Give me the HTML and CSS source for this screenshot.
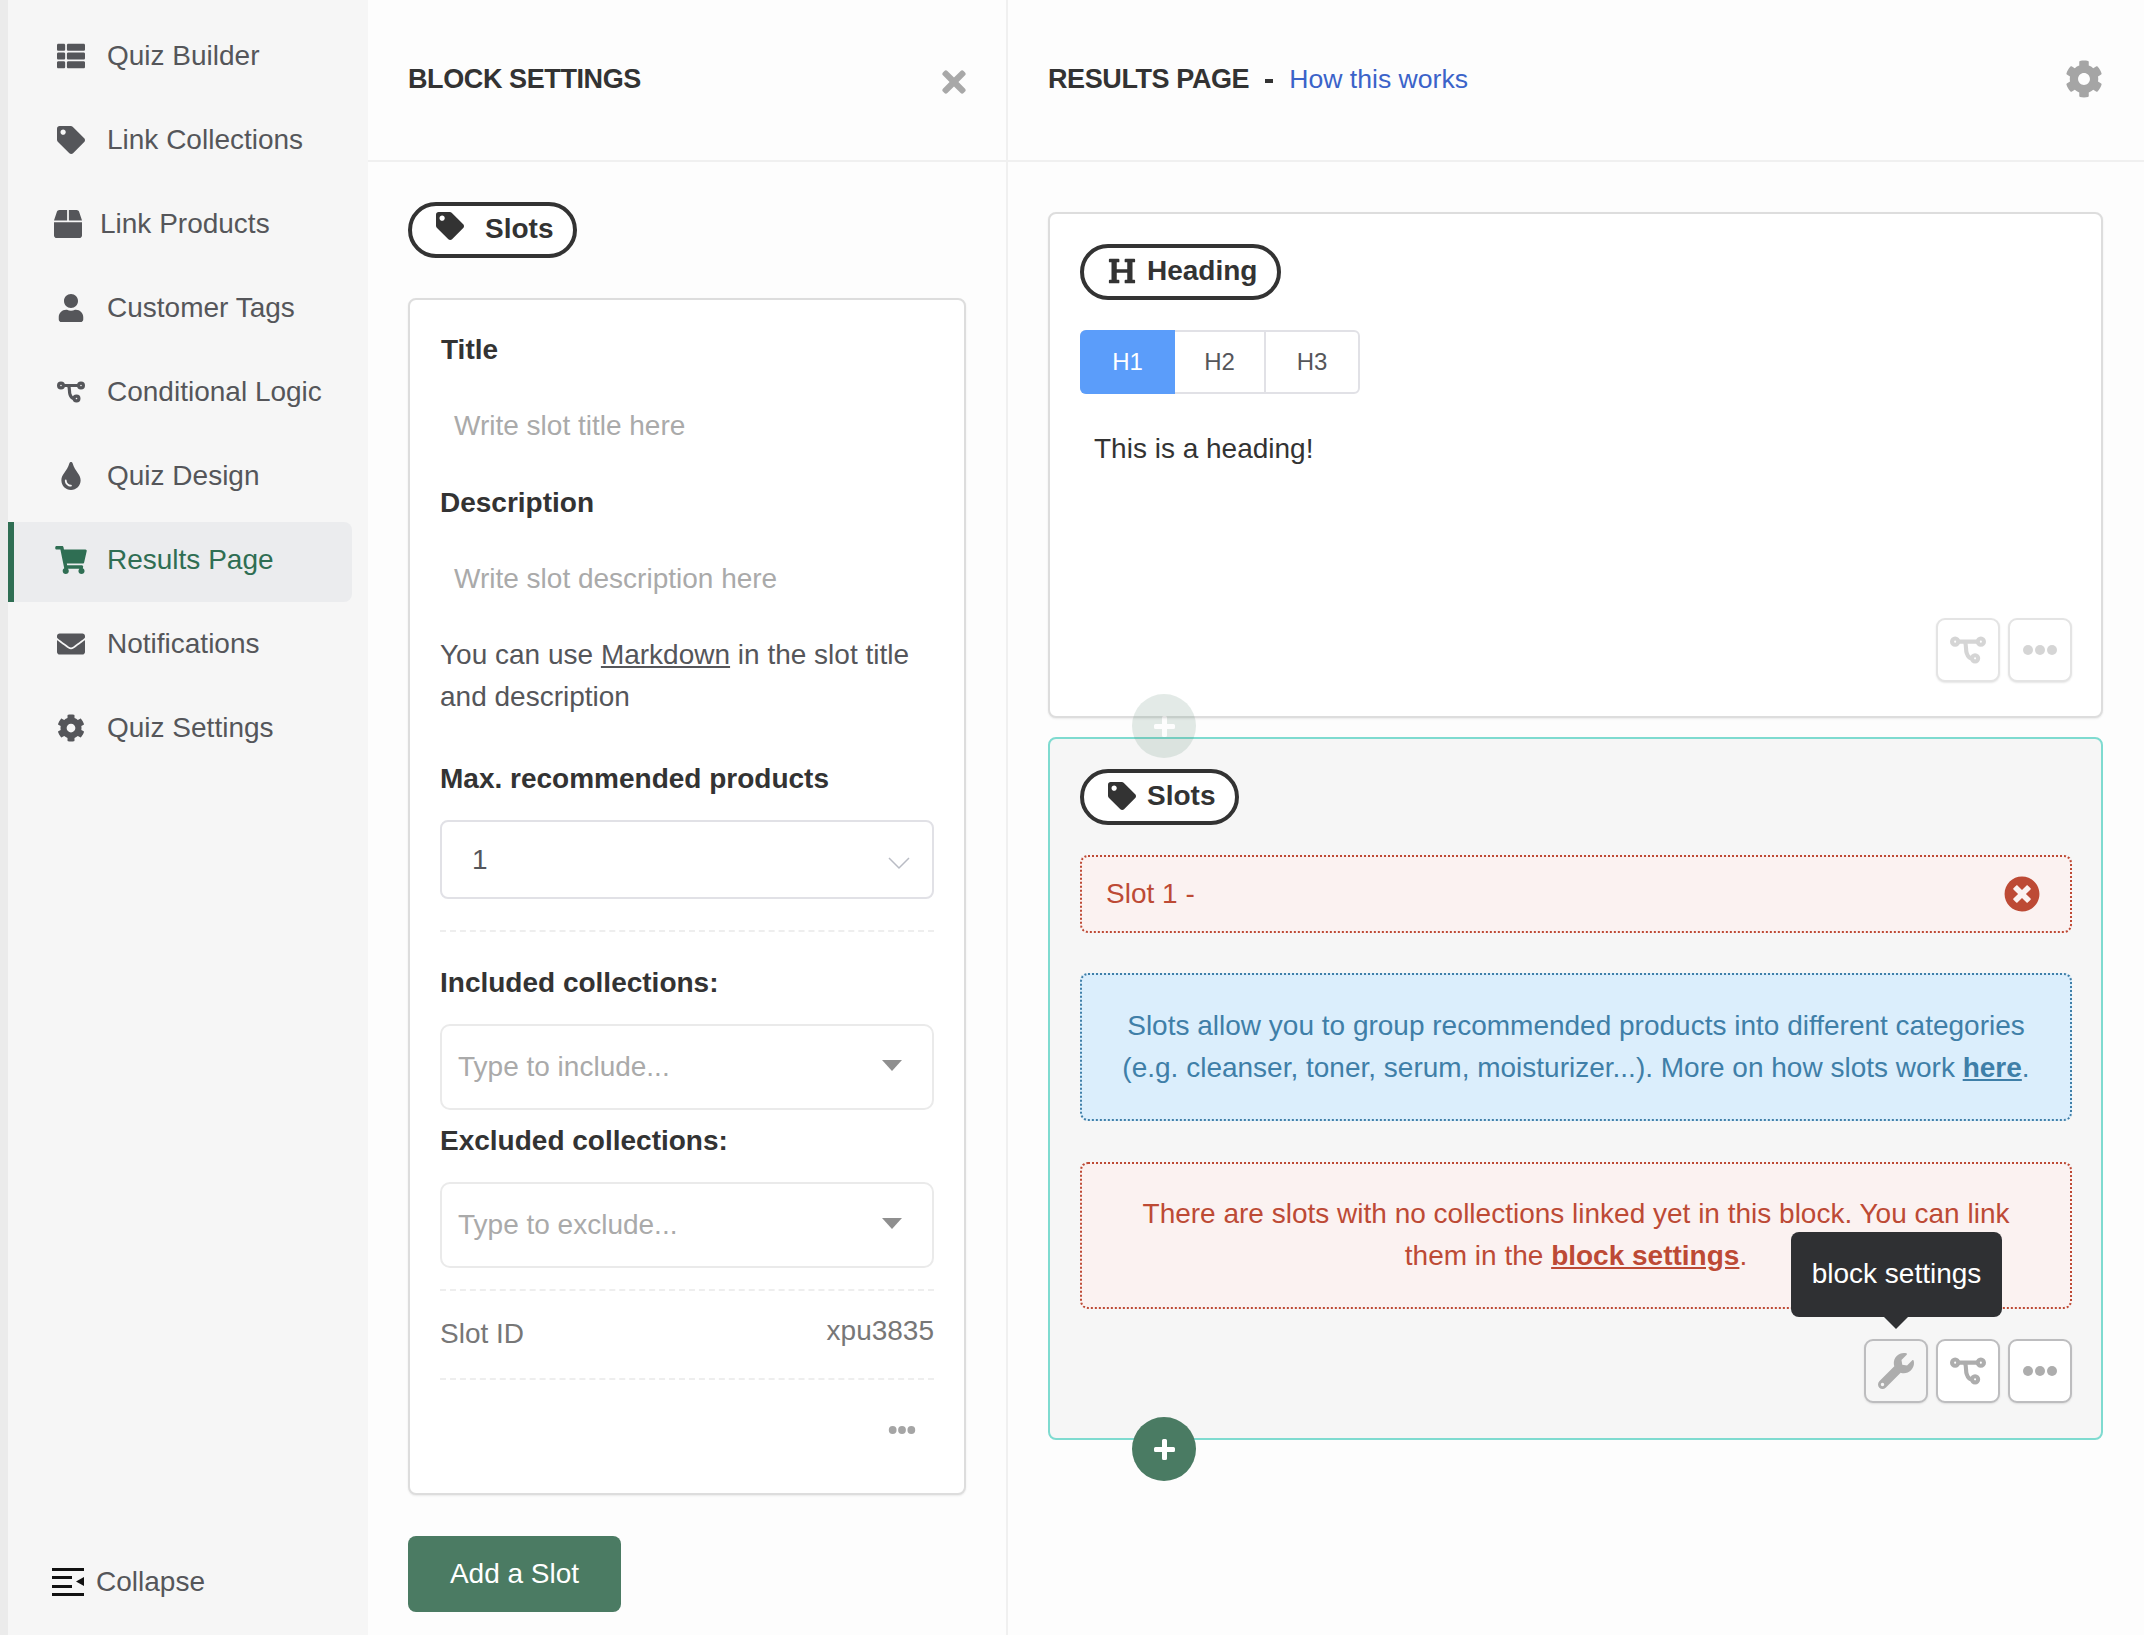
FILE: index.html
```html
<!DOCTYPE html>
<html>
  <head>
    <meta charset="utf-8">
    <title>Results Page</title>
    <link rel="stylesheet" href="styles.css">
  </head>
  <body>
    <svg class="sprites" xmlns="http://www.w3.org/2000/svg">
      <symbol id="i-list" viewBox="0 0 512 512"><path d="M149.333 216v80c0 13.255-10.745 24-24 24H24c-13.255 0-24-10.745-24-24v-80c0-13.255 10.745-24 24-24h101.333c13.255 0 24 10.745 24 24zM0 376v80c0 13.255 10.745 24 24 24h101.333c13.255 0 24-10.745 24-24v-80c0-13.255-10.745-24-24-24H24c-13.255 0-24 10.745-24 24zM125.333 32H24C10.745 32 0 42.745 0 56v80c0 13.255 10.745 24 24 24h101.333c13.255 0 24-10.745 24-24V56c0-13.255-10.745-24-24-24zm80 448H488c13.255 0 24-10.745 24-24v-80c0-13.255-10.745-24-24-24H205.333c-13.255 0-24 10.745-24 24v80c0 13.255 10.745 24 24 24zm-24-424v80c0 13.255 10.745 24 24 24H488c13.255 0 24-10.745 24-24V56c0-13.255-10.745-24-24-24H205.333c-13.255 0-24 10.745-24 24zm24 264H488c13.255 0 24-10.745 24-24v-80c0-13.255-10.745-24-24-24H205.333c-13.255 0-24 10.745-24 24v80c0 13.255 10.745 24 24 24z"/></symbol>
      <symbol id="i-tag" viewBox="0 0 512 512"><path d="M0 252.118V48C0 21.49 21.49 0 48 0h204.118a48 48 0 0 1 33.941 14.059l211.882 211.882c18.745 18.745 18.745 49.137 0 67.882L293.823 497.941c-18.745 18.745-49.137 18.745-67.882 0L14.059 286.059A48 48 0 0 1 0 252.118zM112 64c-26.51 0-48 21.49-48 48s21.49 48 48 48 48-21.49 48-48-21.49-48-48-48z"/></symbol>
      <symbol id="i-box" viewBox="0 0 512 512"><path d="M509.5 184.6L458.9 32.8C452.4 13.2 434.1 0 413.4 0H272v192h238.7c-.4-2.5-.4-5-1.2-7.4zM240 0H98.6c-20.7 0-39 13.2-45.5 32.8L2.5 184.6c-.8 2.4-.8 4.9-1.2 7.4H240V0zM0 224v240c0 26.5 21.5 48 48 48h416c26.5 0 48-21.5 48-48V224H0z"/></symbol>
      <symbol id="i-user" viewBox="0 0 448 512"><path d="M224 256c70.7 0 128-57.3 128-128S294.7 0 224 0 96 57.3 96 128s57.3 128 128 128zm89.6 32h-16.7c-22.2 10.2-46.9 16-72.9 16s-50.6-5.8-72.9-16h-16.7C60.2 288 0 348.2 0 422.4V464c0 26.5 21.5 48 48 48h352c26.5 0 48-21.5 48-48v-41.6c0-74.2-60.2-134.4-134.4-134.4z"/></symbol>
      <symbol id="i-logic" viewBox="0 0 28 21"><g fill="none" stroke="currentColor" stroke-width="3.2"><circle cx="4" cy="4" r="2.4"/><circle cx="24" cy="4" r="2.4"/><circle cx="19.5" cy="17" r="2.4"/><path d="M6.500 4h15M11.500 4c1.500 3 .5 6 1.500 9s2.500 4 4 4"/></g></symbol>
      <symbol id="i-tint" viewBox="0 0 352 512"><path d="M205.22 22.09c-7.94-28.78-49.44-30.12-58.44 0C100.01 179.85 0 222.72 0 333.91 0 432.35 78.72 512 176 512s176-79.65 176-178.09c0-111.75-99.79-153.34-146.78-311.82zM176 448c-61.75 0-112-50.25-112-112 0-8.84 7.16-16 16-16s16 7.16 16 16c0 44.11 35.89 80 80 80 8.84 0 16 7.16 16 16s-7.16 16-16 16z"/></symbol>
      <symbol id="i-cart" viewBox="0 0 576 512"><path d="M528.12 301.319l47.273-208C578.806 78.301 567.391 64 551.99 64H159.208l-9.166-44.81C147.758 8.021 137.93 0 126.529 0H24C10.745 0 0 10.745 0 24v16c0 13.255 10.745 24 24 24h69.883l70.248 343.435C147.325 417.1 136 435.222 136 456c0 30.928 25.072 56 56 56s56-25.072 56-56c0-15.674-6.447-29.835-16.824-40h209.647C430.447 426.165 424 440.326 424 456c0 30.928 25.072 56 56 56s56-25.072 56-56c0-22.172-12.888-41.332-31.579-50.405l5.517-24.276c3.413-15.018-8.002-29.319-23.403-29.319H218.117l-6.545-32h293.145c11.206 0 20.92-7.754 23.403-18.681z"/></symbol>
      <symbol id="i-mail" viewBox="0 0 512 512"><path d="M502.3 190.8c3.9-3.1 9.7-.2 9.7 4.700V400c0 26.5-21.5 48-48 48H48c-26.5 0-48-21.500-48-48V195.600c0-5 5.700-7.800 9.700-4.700 22.400 17.400 52.100 39.500 154.100 113.600 21.100 15.400 56.700 47.800 92.200 47.600 35.700.3 72-32.800 92.300-47.600 102-74.100 131.600-96.300 154-113.700zM256 320c23.200.4 56.600-29.200 73.400-41.400 132.700-96.300 142.800-104.700 173.400-128.700 5.800-4.500 9.200-11.500 9.200-18.900v-19c0-26.500-21.500-48-48-48H48C21.500 64 0 85.500 0 112v19c0 7.400 3.400 14.300 9.200 18.900 30.600 23.900 40.700 32.400 173.400 128.700 16.800 12.200 50.200 41.800 73.400 41.400z"/></symbol>
      <symbol id="i-cog" viewBox="0 0 512 512"><path d="M487.4 315.7l-42.6-24.6c4.300-23.200 4.300-47 0-70.200l42.600-24.600c4.900-2.800 7.100-8.600 5.500-14-11.100-35.600-30-67.800-54.700-94.600-3.800-4.100-10-5.100-14.800-2.300L380.800 110c-17.900-15.400-38.500-27.300-60.800-35.100V25.800c0-5.600-3.900-10.500-9.400-11.700-36.700-8.200-74.300-7.800-109.200 0-5.500 1.200-9.400 6.100-9.400 11.700V75c-22.200 7.900-42.800 19.800-60.800 35.100L88.700 85.500c-4.900-2.800-11-1.900-14.800 2.300-24.700 26.700-43.600 58.900-54.700 94.600-1.700 5.400.6 11.200 5.500 14L67.300 221c-4.300 23.200-4.300 47 0 70.200l-42.600 24.600c-4.900 2.800-7.100 8.600-5.500 14 11.100 35.600 30 67.800 54.700 94.600 3.800 4.100 10 5.100 14.800 2.300l42.600-24.600c17.900 15.400 38.500 27.300 60.800 35.100v49.200c0 5.600 3.900 10.500 9.400 11.700 36.700 8.200 74.300 7.800 109.200 0 5.500-1.200 9.400-6.100 9.400-11.700v-49.200c22.200-7.900 42.800-19.800 60.800-35.100l42.600 24.600c4.900 2.800 11 1.900 14.800-2.300 24.700-26.700 43.600-58.900 54.700-94.600 1.500-5.500-.7-11.300-5.600-14.100zM256 336c-44.100 0-80-35.900-80-80s35.900-80 80-80 80 35.900 80 80-35.900 80-80 80z"/></symbol>
      <symbol id="i-times" viewBox="0 0 352 512"><path d="M242.720 256l100.070-100.070c12.280-12.280 12.280-32.190 0-44.480l-22.240-22.240c-12.280-12.280-32.190-12.280-44.480 0L176 189.280 75.930 89.210c-12.280-12.280-32.190-12.280-44.480 0L9.210 111.450c-12.280 12.280-12.280 32.190 0 44.480L109.280 256 9.210 356.070c-12.280 12.280-12.280 32.190 0 44.480l22.240 22.240c12.280 12.280 32.200 12.280 44.480 0L176 322.720l100.070 100.070c12.280 12.280 32.200 12.280 44.480 0l22.240-22.240c12.280-12.280 12.280-32.190 0-44.480L242.720 256z"/></symbol>
      <symbol id="i-times-circle" viewBox="0 0 512 512"><path d="M256 8C119 8 8 119 8 256s111 248 248 248 248-111 248-248S393 8 256 8zm121.600 313.100c4.700 4.700 4.700 12.300 0 17L338 377.600c-4.700 4.700-12.300 4.700-17 0L256 312l-65.100 65.600c-4.700 4.700-12.300 4.700-17 0L134.400 338c-4.700-4.700-4.700-12.300 0-17l65.600-65-65.600-65.100c-4.700-4.700-4.700-12.300 0-17l39.600-39.600c4.700-4.700 12.300-4.700 17 0l65 65.700 65.100-65.600c4.700-4.700 12.300-4.700 17 0l39.600 39.600c4.700 4.700 4.700 12.300 0 17L312 256l65.600 65.100z"/></symbol>
      <symbol id="i-wrench" viewBox="0 0 512 512"><path d="M507.730 109.100c-2.240-9.030-13.540-12.090-20.120-5.510l-74.360 74.360-67.880-11.310-11.310-67.880 74.360-74.360c6.620-6.620 3.430-17.900-5.660-20.160-47.380-11.740-99.550.91-136.580 37.930-39.640 39.640-50.550 97.100-34.050 147.200L18.740 402.760c-24.990 24.990-24.990 65.510 0 90.500 24.990 24.990 65.510 24.990 90.500 0l213.210-213.210c50.120 16.710 107.470 5.680 147.370-34.220 37.070-37.070 49.700-89.320 37.910-136.730zM64 472c-13.250 0-24-10.750-24-24 0-13.260 10.750-24 24-24s24 10.740 24 24c0 13.250-10.750 24-24 24z"/></symbol>
      <symbol id="i-dots" viewBox="0 0 36 12"><circle cx="6" cy="6" r="5"/><circle cx="18" cy="6" r="5"/><circle cx="30" cy="6" r="5"/></symbol>
      <symbol id="i-heading" viewBox="0 0 512 512"><path d="M448 96v320h32a16 16 0 0 1 16 16v32a16 16 0 0 1-16 16H320a16 16 0 0 1-16-16v-32a16 16 0 0 1 16-16h32V288H160v128h32a16 16 0 0 1 16 16v32a16 16 0 0 1-16 16H32a16 16 0 0 1-16-16v-32a16 16 0 0 1 16-16h32V96H32a16 16 0 0 1-16-16V48a16 16 0 0 1 16-16h160a16 16 0 0 1 16 16v32a16 16 0 0 1-16 16h-32v128h192V96h-32a16 16 0 0 1-16-16V48a16 16 0 0 1 16-16h160a16 16 0 0 1 16 16v32a16 16 0 0 1-16 16z"/></symbol>
      <symbol id="i-plus" viewBox="0 0 21 21"><path d="M8 1.500a1.500 1.500 0 0 1 1.500-1.500h2a1.500 1.500 0 0 1 1.500 1.500V8h6.500a1.500 1.500 0 0 1 1.500 1.500v2a1.500 1.500 0 0 1-1.500 1.500H13v6.500a1.500 1.500 0 0 1-1.500 1.500h-2A1.500 1.500 0 0 1 8 19.500V13H1.500A1.500 1.500 0 0 1 0 11.500v-2A1.500 1.500 0 0 1 1.500 8H8z"/></symbol>
    </svg>

    <div class="app">
      <nav class="sidebar">
        <a class="nav-item"><svg class="nav-icon"><use href="#i-list"/></svg>Quiz Builder</a>
        <a class="nav-item"><svg class="nav-icon"><use href="#i-tag"/></svg>Link Collections</a>
        <a class="nav-item nav-item-box"><svg class="nav-icon"><use href="#i-box"/></svg>Link Products</a>
        <a class="nav-item"><svg class="nav-icon"><use href="#i-user"/></svg>Customer Tags</a>
        <a class="nav-item"><svg class="nav-icon"><use href="#i-logic"/></svg>Conditional Logic</a>
        <a class="nav-item"><svg class="nav-icon"><use href="#i-tint"/></svg>Quiz Design</a>
        <a class="nav-item active"><svg class="nav-icon"><use href="#i-cart"/></svg>Results Page</a>
        <a class="nav-item"><svg class="nav-icon"><use href="#i-mail"/></svg>Notifications</a>
        <a class="nav-item"><svg class="nav-icon"><use href="#i-cog"/></svg>Quiz Settings</a>
        <a class="collapse">
          <svg class="collapse-icon" viewBox="0 0 32 28">
            <path d="M0 0h32v3H0zM0 8h20v3H0zM0 17h20v3H0zM0 25h32v3H0zM32 9v9l-8-4.500z"/>
          </svg>
          Collapse
        </a>
      </nav>

      <section class="settings">
        <header class="panel-header">
          <h2 class="panel-title">BLOCK SETTINGS</h2>
          <svg class="close-icon"><use href="#i-times"/></svg>
        </header>
        <div class="settings-body">
          <div class="pill pill-wide"><svg class="pill-icon"><use href="#i-tag"/></svg>Slots</div>

          <div class="slot-card">
            <label class="label label-first">Title</label>
            <div class="text-input">Write slot title here</div>
            <label class="label">Description</label>
            <div class="text-input">Write slot description here</div>
            <p class="help">You can use <u>Markdown</u> in the slot title and description</p>

            <label class="label label-max">Max. recommended products</label>
            <div class="select">
              <span>1</span>
              <svg class="select-chevron" viewBox="0 0 22 14"><path d="M1 2l10 10L21 2" fill="none" stroke="#b9bcc4" stroke-width="1.500"/></svg>
            </div>
            <hr class="dashed dashed-max">

            <label class="label">Included collections:</label>
            <div class="combo">Type to include...<i class="caret"></i></div>
            <label class="label label-excluded">Excluded collections:</label>
            <div class="combo">Type to exclude...<i class="caret"></i></div>
            <hr class="dashed dashed-id">

            <div class="slot-id"><span>Slot ID</span><span class="slot-id-value">xpu3835</span></div>
            <hr class="dashed dashed-end">
            <div class="slot-more"><svg class="slot-dots"><use href="#i-dots"/></svg></div>
          </div>

          <button class="add-slot">Add a Slot</button>
        </div>
      </section>

      <section class="results">
        <header class="panel-header results-header">
          <h2 class="panel-title">RESULTS PAGE</h2>
          <span class="title-sep"></span>
          <a class="how-link">How this works</a>
          <svg class="gear-icon"><use href="#i-cog"/></svg>
        </header>

        <div class="results-body">
          <div class="block">
            <div class="pill pill-tight"><svg class="pill-icon pill-icon-heading"><use href="#i-heading"/></svg>Heading</div>
            <div class="levels">
              <span class="level level-on">H1</span>
              <span class="level">H2</span>
              <span class="level">H3</span>
            </div>
            <div class="heading-text">This is a heading!</div>
            <div class="block-actions faded">
              <span class="action"><svg class="action-logic"><use href="#i-logic"/></svg></span>
              <span class="action"><svg class="action-dots"><use href="#i-dots"/></svg></span>
            </div>
            <span class="add-block add-block-faded"><svg class="add-plus"><use href="#i-plus"/></svg></span>
          </div>

          <div class="block block-active">
            <div class="pill pill-tight pill-slots"><svg class="pill-icon"><use href="#i-tag"/></svg>Slots</div>
            <div class="slot-row">
              <span>Slot 1 -</span>
              <svg class="slot-remove"><use href="#i-times-circle"/></svg>
            </div>
            <div class="note note-info">Slots allow you to group recommended products into different categories (e.g. cleanser, toner, serum, moisturizer...). More on how slots work <a>here</a>.</div>
            <div class="note note-error">There are slots with no collections linked yet in this block. You can link them in the <a>block settings</a>.</div>
            <div class="block-actions">
              <span class="action action-pressed">
                <svg class="action-wrench"><use href="#i-wrench"/></svg>
                <span class="tooltip">block settings</span>
              </span>
              <span class="action"><svg class="action-logic"><use href="#i-logic"/></svg></span>
              <span class="action"><svg class="action-dots"><use href="#i-dots"/></svg></span>
            </div>
            <span class="add-block"><svg class="add-plus"><use href="#i-plus"/></svg></span>
          </div>
        </div>
      </section>
    </div>
  </body>
</html>
```

FILE: styles.css
```css
* {
  box-sizing: border-box;
}
html,
body {
  margin: 0;
  height: 100%;
  overflow: hidden;
}
body {
  background: #fdfdfd;
  color: #333;
  font-family: "Liberation Sans", Arial, sans-serif;
  font-size: 28px;
}
.sprites {
  display: none;
}
.app {
  display: flex;
  height: 1635px;
}

/* sidebar */
.sidebar {
  display: flex;
  flex-direction: column;
  gap: 4px;
  width: 368px;
  padding: 18px 16px 0 0;
  background: #f6f6f6;
  border-left: 8px solid #ebebeb;
  color: #55565a;
}
.nav-item {
  display: flex;
  align-items: center;
  flex: none;
  height: 80px;
  padding: 0 0 4px 49px;
  border-radius: 0 8px 8px 0;
}
.nav-icon {
  width: 28px;
  height: 28px;
  margin-right: 22px;
  fill: currentColor;
  color: #55565a;
}
.nav-item-box {
  padding-left: 46px;
}
.nav-item-box .nav-icon {
  margin-right: 18px;
}
.nav-item.active {
  padding-left: 43px;
  background: #ebecee;
  border-left: 6px solid #2f6e53;
  color: #2f6e53;
}
.nav-item.active .nav-icon {
  width: 32px;
  margin-left: -2px;
  margin-right: 20px;
  color: #2f6e53;
}
.collapse {
  display: flex;
  align-items: center;
  gap: 12px;
  margin-top: auto;
  padding: 0 0 37px 44px;
}
.collapse-icon {
  width: 32px;
  height: 28px;
  fill: #111;
}

/* panels */
.panel-header {
  display: flex;
  align-items: center;
  height: 162px;
  padding: 0 40px 2px;
  border-bottom: 2px solid #f0f0f0;
}
.panel-title {
  margin: 0;
  font-size: 27px;
  font-weight: 700;
  color: #333;
  letter-spacing: -0.4px;
}
.close-icon {
  width: 24px;
  height: 34px;
  margin: 5px 0 0 auto;
  fill: #a8a8a8;
}
.settings {
  flex: none;
  width: 640px;
  border-right: 2px solid #f0f0f0;
}
.settings-body {
  padding: 40px 40px 0;
}
.results {
  flex: 1;
  min-width: 0;
}
.results-header {
  padding-right: 41px;
}
.title-sep {
  width: 8px;
  height: 4px;
  margin: 4px 16px 0 16px;
  background: #333;
}
.how-link {
  font-size: 26.6px;
  color: #3b63c9;
}
.gear-icon {
  width: 38px;
  height: 40px;
  margin-left: auto;
  fill: #a5a5a5;
}
.results-body {
  padding: 50px 41px 0 40px;
}

/* pills */
.pill {
  display: inline-flex;
  align-items: center;
  height: 56px;
  padding-bottom: 2px;
  border: 4px solid #333;
  border-radius: 28px;
  background: #fff;
  font-weight: 700;
  color: #333;
}
.pill-wide {
  width: 169px;
  padding-left: 24px;
}
.pill-wide .pill-icon {
  margin-right: 21px;
  margin-top: -6px;
}
.pill-tight {
  padding-left: 24px;
  padding-right: 20px;
}
.pill-slots {
  padding-right: 20px;
}
.pill-slots .pill-icon {
  margin-right: 11px;
}
.pill-icon {
  width: 28px;
  height: 28px;
  margin-right: 12px;
  fill: #333;
}
.pill-icon-heading {
  margin-right: 11px;
}

/* slot card */
.slot-card {
  height: 1197px;
  margin-top: 40px;
  padding: 26px 30px 0;
  background: #fff;
  border: 2px solid #ddd;
  border-radius: 8px;
  box-shadow: 0 1px 2px rgba(0, 0, 0, 0.08);
}
.label {
  display: block;
  height: 48px;
  line-height: 48px;
  font-weight: 700;
  color: #333;
}
.label-first {
  margin-left: 1px;
}
.text-input {
  height: 76px;
  margin: 14px 0 15px;
  padding: 0 14px;
  line-height: 76px;
  color: #aaa;
}
.help {
  margin: 17px 0 0;
  line-height: 42px;
  color: #55565a;
}
.label-max {
  margin-top: 37px;
}
.select {
  display: flex;
  align-items: center;
  justify-content: space-between;
  height: 79px;
  margin-top: 17px;
  padding: 0 22px 0 30px;
  border: 2px solid #e1e1e6;
  border-radius: 8px;
  color: #55565a;
}
.select-chevron {
  width: 22px;
  height: 14px;
  margin-top: 6px;
}
.dashed {
  height: 0;
  margin: 0;
  border: 0;
  border-top: 2px dashed #eee;
}
.dashed-max {
  margin: 31px 0 27px;
}
.combo {
  display: flex;
  align-items: center;
  justify-content: space-between;
  height: 86px;
  margin-top: 17px;
  padding: 0 30px 0 16px;
  border: 2px solid #eaeaea;
  border-radius: 10px;
  color: #aaa;
}
.caret {
  margin-bottom: 4px;
  border-top: 11px solid #8f8f8f;
  border-left: 10px solid transparent;
  border-right: 10px solid transparent;
}
.label-excluded {
  margin-top: 7px;
}
.dashed-id {
  margin-top: 21px;
}
.slot-id {
  display: flex;
  justify-content: space-between;
  height: 87px;
  padding-top: 25px;
  line-height: 36px;
  color: #777;
}
.slot-id-value {
  margin-top: -3px;
}
.slot-more {
  display: flex;
  justify-content: flex-end;
  padding: 45px 18px 0 0;
}
.slot-dots {
  width: 28px;
  height: 10px;
  fill: #a5a5a5;
}
.add-slot {
  display: block;
  width: 213px;
  height: 76px;
  margin-top: 41px;
  padding: 0;
  background: #4b7b63;
  border: 0;
  border-radius: 8px;
  color: #fff;
  font: inherit;
}

/* result blocks */
.block {
  position: relative;
  display: flex;
  flex-direction: column;
  align-items: flex-start;
  height: 506px;
  padding: 30px 29px 0 30px;
  background: #fff;
  border: 2px solid #ddd;
  border-radius: 8px;
  box-shadow: 0 1px 2px rgba(0, 0, 0, 0.08);
}
.block-active {
  height: 703px;
  margin-top: 19px;
  background: #f6f6f6;
  border-color: #7fdbd0;
  box-shadow: none;
}
.levels {
  display: flex;
  height: 64px;
  margin-top: 30px;
  border: 2px solid #e1e1e6;
  border-radius: 6px;
  font-size: 24px;
  color: #55565a;
}
.level {
  display: flex;
  align-items: center;
  justify-content: center;
  width: 91px;
  border-right: 2px solid #e1e1e6;
}
.level:last-child {
  width: 92px;
  border-right: 0;
}
.level-on {
  width: 95px;
  margin: -2px 0 -2px -2px;
  background: #5b9dfa;
  border-right: 0;
  border-radius: 6px 0 0 6px;
  color: #fff;
}
.heading-text {
  height: 224px;
  padding: 37px 14px 0;
  line-height: 36px;
  color: #333;
}
.block-actions {
  display: flex;
  gap: 8px;
  align-self: flex-end;
}
.action {
  position: relative;
  display: flex;
  align-items: center;
  justify-content: center;
  width: 64px;
  height: 64px;
  background: #fff;
  border: 2px solid #bdbdbf;
  border-radius: 9px;
  box-shadow: 0 1px 2px rgba(0, 0, 0, 0.1);
}
.action-pressed {
  background: #f6f6f6;
}
.faded .action {
  border-color: #e4e4e4;
}
.faded .action svg {
  opacity: 0.5;
}
.action svg {
  fill: #adadad;
  color: #adadad;
}
.action-logic {
  width: 36px;
  height: 28px;
}
.action-dots {
  width: 36px;
  height: 12px;
}
.action-wrench {
  width: 36px;
  height: 36px;
}
.tooltip {
  position: absolute;
  bottom: 84px;
  left: 50%;
  width: 211px;
  height: 85px;
  margin-left: -105px;
  background: #2f3033;
  border-radius: 8px;
  color: #fff;
  line-height: 83px;
  text-align: center;
  white-space: nowrap;
}
.tooltip::after {
  content: "";
  position: absolute;
  top: 100%;
  left: 50%;
  margin-left: -13px;
  border-top: 12px solid #2f3033;
  border-left: 12px solid transparent;
  border-right: 12px solid transparent;
}
.add-block {
  position: absolute;
  left: 82px;
  bottom: -43px;
  display: flex;
  align-items: center;
  justify-content: center;
  width: 64px;
  height: 64px;
  background: #4a7b63;
  border-radius: 50%;
  z-index: 2;
}
.add-block-faded {
  bottom: -42px;
  opacity: 0.15;
}
.add-plus {
  width: 21px;
  height: 21px;
  fill: #fff;
}

/* slot row and notes */
.slot-row {
  display: flex;
  align-items: center;
  justify-content: space-between;
  width: 100%;
  height: 78px;
  margin-top: 30px;
  padding: 0 30px 0 24px;
  background: #fbf2f1;
  border: 2px dotted #bd4a35;
  border-radius: 8px;
  color: #bd4a35;
}
.slot-remove {
  width: 36px;
  height: 36px;
  fill: #bd4a35;
}
.note {
  width: 100%;
  padding: 30px 28px 0;
  line-height: 42px;
  text-align: center;
  border-radius: 8px;
  border-width: 2px;
  border-style: dotted;
}
.note a {
  font-weight: 700;
  text-decoration: underline;
}
.note-info {
  height: 148px;
  margin-top: 40px;
  background: #dbeefc;
  border-color: #3f7fa8;
  color: #3f7fa8;
}
.note-error {
  height: 147px;
  margin-top: 41px;
  padding-top: 29px;
  background: #fbf2f1;
  border-color: #bd4a35;
  color: #bd4a35;
}
.block-active .block-actions {
  margin-top: 30px;
}
```
